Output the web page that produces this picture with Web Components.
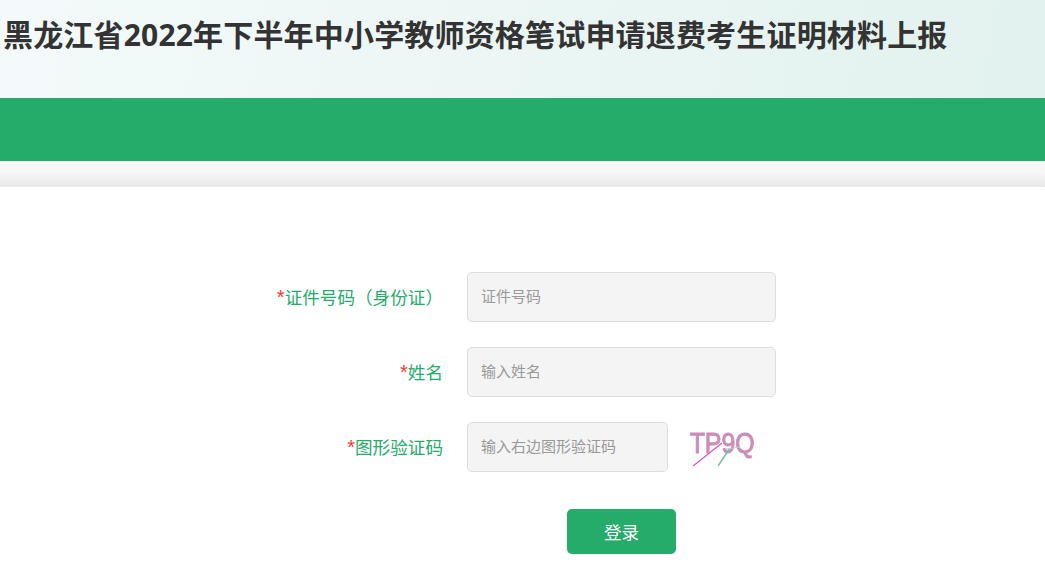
<!doctype html>
<html>
<head>
  <meta charset="utf-8">
  <title>证明材料上报</title>
  <style>
    html, body { margin: 0; background: #fff; }
    body { font-family: "Noto Sans CJK SC", "Liberation Sans", sans-serif; }
  </style>
  <template id="page-header-tpl">
    <style>
      :host { display: block; }
      .top {
        height: 98px;
        padding-left: 3px;
        box-sizing: border-box;
        background: linear-gradient(100deg, #f4fafb 0%, #e2f2ee 100%);
      }
      h1 {
        margin: 0;
        padding-top: 12px;
        font: 700 30px/46px "Open Sans", "Noto Sans CJK SC", sans-serif;
        letter-spacing: .18px;
        color: #333;
        white-space: nowrap;
      }
      .band { height: 63px; background: #25ab6a; }
      .shade { height: 26px; background: linear-gradient(#f7f7f7 0, #f7f7f7 11px, #e8e8e8 26px); }
    </style>
    <div class="top"><h1><slot></slot></h1></div>
    <div class="band"></div>
    <div class="shade"></div>
  </template>

  <template id="form-row-tpl">
    <style>
      :host { display: grid; grid-template-columns: 443px auto; column-gap: 24px; align-items: center; height: 50px; }
      .label { text-align: right; font-size: 17.6px; line-height: 50px; height: 50px; color: #25ab6a; white-space: nowrap; }
      .star { color: #f33; font: 20px/1 "Liberation Sans", sans-serif; }
      .field { display: flex; align-items: center; gap: 20px; }
    </style>
    <div class="label"><span class="star">*</span><slot name="label"></slot></div>
    <div class="field"><slot></slot></div>
  </template>

  <template id="text-field-tpl">
    <style>
      :host { display: block; width: 309px; height: 50px; }
      :host([short]) { width: 201px; }
      input {
        display: block; width: 100%; height: 100%;
        box-sizing: border-box;
        margin: 0; padding: 0 13px 3px;
        border: 1px solid #ddd; border-radius: 5px;
        background: #f4f4f4;
        font: 15px "Noto Sans CJK SC", "Liberation Sans", sans-serif;
        color: #333; outline: none;
      }
      input::placeholder { color: #999; opacity: 1; }
    </style>
    <input type="text">
  </template>

  <template id="captcha-image-tpl">
    <style>
      :host { display: block; position: relative; width: 70px; height: 50px; background: #fff; }
      .code {
        display: block; padding: 3px 0 0 2px;
        font: 400 30px/36px "Liberation Sans", sans-serif;
        -webkit-text-stroke: 1px #cc8dbb;
        color: #cc8dbb; white-space: nowrap;
        transform: scaleX(.83);
        transform-origin: 0 0;
        filter: blur(.35px);
      }
      svg { position: absolute; left: 0; top: 0; }
    </style>
    <span class="code"><slot></slot></span>
    <svg width="80" height="50" viewBox="0 0 80 50" fill="none">
      <path d="M5 44 L34 21" stroke="#dc55c4" stroke-width="1.3"/>
      <path d="M30 44 L42 26" stroke="#6fc09a" stroke-width="1.4"/>
      <path d="M38 27 L52 25" stroke="#b7d3cd" stroke-width="1"/>
    </svg>
  </template>

  <template id="submit-button-tpl">
    <style>
      :host { display: block; margin-left: 567px; width: 109px; }
      button {
        display: block; width: 100%; height: 45px; padding: 0 0 1px;
        border: 0; border-radius: 5px;
        background: #25ab6a; color: #fff;
        font: 17.6px "Noto Sans CJK SC", "Liberation Sans", sans-serif;
      }
    </style>
    <button type="button"><slot></slot></button>
  </template>

  <template id="login-form-tpl">
    <style>
      :host { display: flex; flex-direction: column; gap: 25px; padding-top: 85px; }
      ::slotted(submit-button) { margin-top: 12px; }
    </style>
    <slot></slot>
  </template>
</head>
<body>
<page-header>黑龙江省2022年下半年中小学教师资格笔试申请退费考生证明材料上报</page-header>
<login-form>
  <form-row><span slot="label">证件号码（身份证）</span><text-field placeholder="证件号码"></text-field></form-row>
  <form-row><span slot="label">姓名</span><text-field placeholder="输入姓名"></text-field></form-row>
  <form-row><span slot="label">图形验证码</span><text-field short placeholder="输入右边图形验证码"></text-field><captcha-image>TP9Q</captcha-image></form-row>
  <submit-button>登录</submit-button>
</login-form>
<script>
  // all of these just stamp their template, text-field also passes the placeholder on
  function stamp(name) {
    customElements.define(name, class extends HTMLElement {
      constructor() {
        super();
        let shadowRoot = this.attachShadow({mode: 'open'});
        shadowRoot.appendChild(document.querySelector('#' + name + '-tpl').content.cloneNode(true));
      }
    });
  }
  ['page-header', 'form-row', 'captcha-image', 'submit-button', 'login-form'].forEach(stamp);

  customElements.define('text-field', class extends HTMLElement {
    constructor() {
      super();
      let shadowRoot = this.attachShadow({mode: 'open'});
      shadowRoot.appendChild(document.querySelector('#text-field-tpl').content.cloneNode(true));
    }
    connectedCallback() {
      this.shadowRoot.querySelector('input').placeholder = this.getAttribute('placeholder') || '';
    }
  });
</script>
</body>
</html>
